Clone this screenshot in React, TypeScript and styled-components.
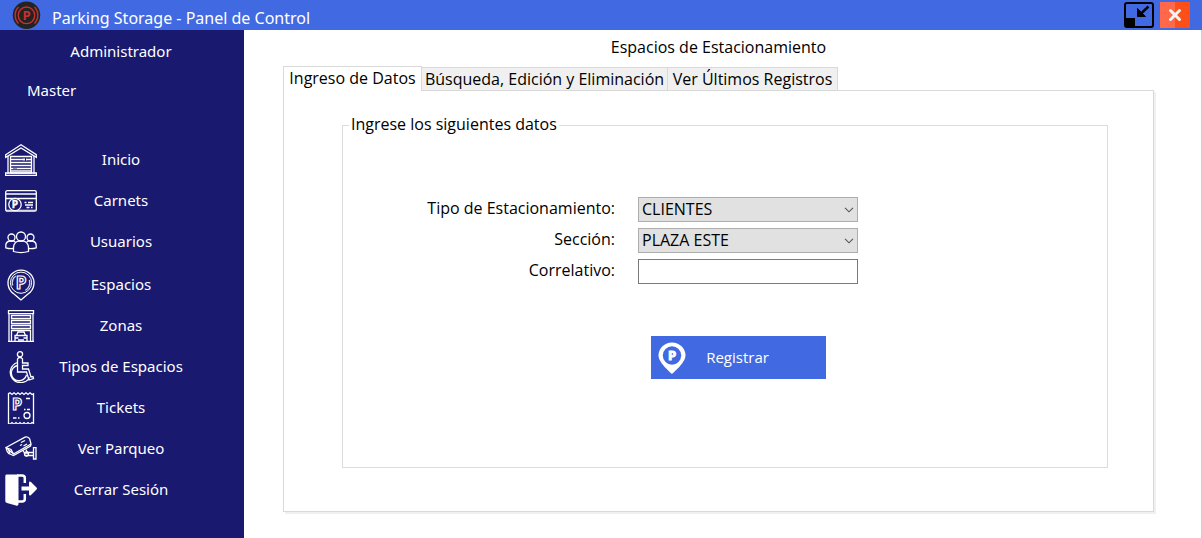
import React, { useState } from 'react';
import styled, { createGlobalStyle } from 'styled-components';

const GlobalStyle = createGlobalStyle`
  * { box-sizing: border-box; }
  body { margin: 0; background: #fff; }
  body {
    font-family: 'Noto Sans', 'Open Sans', sans-serif;
    font-size: 15px;
    line-height: 20px;
  }
  button, input, select { font: inherit; }
`;

const Shell = styled.div`
  display: flex;
  flex-direction: column;
  min-height: 100vh;
`;

const TitleBar = styled.header`
  display: flex;
  align-items: center;
  height: 30px;
  padding: 0 12px;
  background: #4169e1;
  color: #fff;
`;

const AppName = styled.h1`
  flex: 1;
  margin: 0;
  padding: 6px 0 0 11px;
  font-size: 16px;
  font-weight: 400;
  line-height: 24px;
`;

const WindowButtons = styled.div`
  display: flex;
  gap: 6px;
`;

const WindowButton = styled.button`
  display: block;
  width: 30px;
  height: 26px;
  padding: 0;
  border: 0;
  background: none;
`;

const Body = styled.div`
  display: flex;
  flex: 1;
`;

const Sidebar = styled.nav`
  flex: none;
  width: 244px;
  background: #191970;
  color: #fff;
`;

const Role = styled.div`
  padding: 11px 2px 0 0;
  text-align: center;
`;

const UserName = styled.div`
  padding: 19px 27px 0;
`;

const Menu = styled.ul`
  margin: 39px 0 0;
  padding: 0;
  list-style: none;

  & + & { margin-top: 2px; }
`;

const MenuLink = styled.a`
  display: grid;
  grid-template-columns: 32px 1fr 32px;
  align-items: center;
  height: 41px;
  padding: 0 7px 0 5px;
  color: #fff;
  text-align: center;
  text-decoration: none;
`;

const Caption = styled.span`
  padding-bottom: 2px;
`;

const Main = styled.main`
  display: flex;
  flex: 1;
  flex-direction: column;
  padding: 7px 47px 26px 39px;
  border-right: 1px solid #d0d0d0;
  font-family: 'Open Sans', 'Noto Sans', sans-serif;
  font-size: 16px;
`;

const Heading = styled.h2`
  margin: 0 0 9px;
  font-size: 16px;
  font-weight: 400;
  line-height: 20px;
  text-align: center;
`;

const TabList = styled.div`
  display: flex;
  align-items: flex-end;
`;

const Tab = styled.button<{ $active: boolean; $width: number }>`
  position: relative;
  width: ${p => p.$width}px;
  height: ${p => (p.$active ? 25 : 23)}px;
  margin: 0 -1px ${p => (p.$active ? -1 : 0)}px 0;
  padding: ${p => (p.$active ? '0 0 3px' : '0')};
  border: 1px solid #d9d9d9;
  border-bottom: 0;
  background: ${p => (p.$active ? '#fff' : '#f0f0f0')};
  color: #000;
  white-space: nowrap;
  z-index: ${p => (p.$active ? 1 : 0)};
`;

const Panel = styled.section`
  flex: 1;
  display: flex;
  padding: 23px 45px 43px 58px;
  border: 1px solid #d9d9d9;
  box-shadow: 2px 2px 0 #f0f0f0;
`;

const Form = styled.form`
  display: flex;
  flex: 1;
`;

const Group = styled.fieldset`
  flex: 1;
  min-width: 0;
  margin: 0;
  padding: 61px 0 80px;
  border: 1px solid #dcdcdc;
`;

const Legend = styled.legend`
  margin-left: 6px;
  padding: 0 2px 2px;
`;

const Fields = styled.div`
  display: grid;
  grid-template-columns: 272px 220px;
  gap: 6px 23px;
`;

const Label = styled.label`
  padding-top: 1px;
  text-align: right;
`;

const SelectBox = styled.div`
  display: grid;
  align-items: center;

  & > * { grid-area: 1 / 1; }
  svg { justify-self: end; margin-right: 4px; pointer-events: none; }
`;

const Select = styled.select`
  width: 100%;
  height: 25px;
  padding: 0 20px 1px 3px;
  appearance: none;
  border: 1px solid #adadad;
  border-radius: 0;
  background: #e1e1e1;
  color: #000;
`;

const TextInput = styled.input`
  width: 100%;
  height: 25px;
  padding: 0 4px;
  border: 1px solid #7a7a7a;
  background: #fff;
`;

const SubmitButton = styled.button`
  display: grid;
  grid-template-columns: 32px 1fr 32px;
  align-items: center;
  width: 175px;
  height: 43px;
  margin: 52px 0 0 308px;
  padding: 0 7px 0 5px;
  border: 0;
  background: #4169e1;
  color: #fff;
  font-size: 15px;
`;

const LineIcon = styled.svg`
  display: block;
  width: 32px;
  height: 32px;
  fill: none;
  stroke: #fff;
  stroke-width: 1.3;
`;

const Letter = styled.text`
  font-family: 'Open Sans', sans-serif;
  font-weight: 700;
  text-anchor: middle;
`;

const Icon = ({ children }: { children: React.ReactNode }) => (
  <LineIcon viewBox="0 0 32 32" aria-hidden="true">{children}</LineIcon>
);

const GarageIcon = () => (
  <Icon>
    <path d="M.7 10.7 16 .8l15.3 9.900v2.600L16 4 .7 13.300z" />
    <path d="M3 12v18M29 12v18M.6 29h30.800v2.400H.6z" />
    <path d="M5.500 12.500h21V29h-21z" />
    <path d="M6 15.500h12M22 15.500h4M6 18.500h20M6 21.500h20M6 24.500h2M12 24.500h14M6 27h20" />
    <path d="M18 15.500h2M21 15.500h1M8.500 24.500h1M10.500 24.500h1" strokeWidth="2" />
  </Icon>
);

const CardIcon = () => (
  <Icon>
    <rect x=".7" y="5.700" width="30.600" height="20.500" rx="1.500" />
    <path d="M1 9h30M1 13.500h30" />
    <path d="M1 25.300h30" opacity=".7" />
    <circle cx="10" cy="19.500" r="6.200" fill="#191970" />
    <Letter x="10" y="23.200" fontSize="10" fill="#fff" strokeWidth=".4">P</Letter>
    <path d="M19.500 17.500h2M23 17.500h5M20 20h8M21.500 22.500h3M26 22.500h1.500" />
  </Icon>
);

const UsersIcon = () => (
  <Icon>
    <circle cx="16" cy="10.500" r="4.500" />
    <path d="M8.500 25.500v-4c0-3.500 2.500-6 5-6.300h5c2.500.3 5 2.800 5 6.300v4c-4 1.200-11 1.200-15 0z" />
    <circle cx="6.500" cy="11.500" r="3.500" />
    <circle cx="25.500" cy="11.500" r="3.500" />
    <path d="M8.500 22.500C5.500 22.800 3 22.500.8 21.800v-2c0-2.800 2-4.500 4-4.800h4l1.500 1M23.500 22.500c3 .3 5.500 0 7.700-.7v-2c0-2.800-2-4.500-4-4.800h-4l-1.500 1" />
  </Icon>
);

const PinIcon = () => (
  <Icon>
    <path d="M16 31 9 25A13 13 0 1 1 23 25z" />
    <circle cx="16" cy="13.700" r="10.600" strokeWidth="1" />
    <path d="M7.700 16.500a9 9 0 0 1 3-9.500M24.300 11a9 9 0 0 1-4 10.500" opacity=".8" />
    <Letter x="16" y="19.800" fontSize="17" strokeWidth="1.200">P</Letter>
  </Icon>
);

const WarehouseIcon = () => (
  <Icon>
    <path d="M3.500.7h25v3h-25zM4 4v27.500M28 4v27.500M3 31.400h26M6.500 20v11M25.500 20v11" />
    <path d="M6.500 5.500h19v3h-19zM6.500 10.500h19v3h-19zM6.500 15.500h19v3h-19zM6.500 20.500h19" />
    <path d="M10 31v-5.500h12V31M11.500 25.500l1.500-3.500h6l1.500 3.500M10.500 28h3M18.500 28H22M13 30h6" />
  </Icon>
);

const WheelchairIcon = () => (
  <Icon>
    <circle cx="15" cy="3.300" r="2.600" />
    <path d="M12.500 8c1-2 4-2 5 0v4h5.500v2.500h-5.500v3.500h6l2.500 8 2-.5.5 2-4.500 1.500-2.500-8h-9z" />
    <path d="M12.500 11.500A10.300 10.300 0 1 0 24.500 26.500M12.500 14.500A7.700 7.700 0 1 0 21.500 24" />
  </Icon>
);

const TicketIcon = () => (
  <Icon>
    <path d="M3.500 1.500 5 .8l2 1.700 2-1.700 2 1.700 2-1.700 2 1.700 2-1.700 2 1.700 2-1.700 2 1.700 2-1.700 2 1.700 1.500-.7v29.500l-1.500-.7-2 1.700-2-1.700-2 1.700-2-1.700-2 1.700-2-1.700-2 1.700-2-1.700-2 1.700-2-1.700-2 1.700-1.500-.7z" />
    <Letter x="12" y="17.500" fontSize="16" strokeWidth="1.200">P</Letter>
    <circle cx="22" cy="23.500" r="3" />
    <path d="M21 6.500h4M19 17.500h1.500M22 17.500h3M8 26h3.500M13 26h1.500" />
  </Icon>
);

const CameraIcon = () => (
  <Icon>
    <path d="M1 14.500 20 4.200c2-.8 4 .3 4.700 1.800l1.300 5-17.500 10z" />
    <path d="M1 14.500 2 18c.5 1.600 2 2.800 4 3.500l2.500 1 17-9.500.5-2M8.500 21 6 16.500 1 14.500M3.500 17l1.500 3" />
    <path d="M15 12.500l2-1M18.500 13l3.500-2M16 9.500l4-2" />
    <path d="M18 17.500l1.500 2.500h3l-1.500-3.500M22.500 19.500h6M20 22.500h8.500M28.500 14.700h2.500v11.300h-2.500z" />
    <circle cx="21.500" cy="21" r="2" />
  </Icon>
);

const LogoutIcon = () => (
  <Icon>
    <path d="M2 .5h10c1 0 1.500.5 1.500 1.500v27.500c0 2-1 2.500-2.500 2L2 29C.7 28.500.3 28 .3 26.500V2.500C.3 1 .8.500 2 .5z" fill="#fff" stroke="none" />
    <path d="M12 1.500h5c2 0 2.800.8 2.800 2.500v5M12 27.500h5c2 0 2.800-.8 2.800-2.500v-5" strokeWidth="2.500" />
    <path d="M16.500 12.500H24V9c0-1.500 1-2 2-1l5.500 5.500c.6.600.6 1.400 0 2L26 21c-1 1-2 .5-2-1v-3.500h-7.500z" fill="#fff" stroke="none" />
  </Icon>
);

const Logo = () => (
  <svg width="29" height="28" viewBox="0 0 29 28" aria-hidden="true">
    <circle cx="14.500" cy="14.300" r="13.700" fill="#232323" />
    <g fill="none" stroke="#c9302c" strokeWidth="1.400">
      <circle cx="14.500" cy="14.300" r="8.300" />
      <path d="M6.500 6a12 12 0 0 0 0 16.600M22.500 6a12 12 0 0 1 0 16.600" />
    </g>
    <Letter x="14.700" y="19" fontSize="13" fill="#c9302c">P</Letter>
  </svg>
);

const RestoreIcon = () => (
  <svg width="30" height="26" viewBox="0 0 30 26" aria-hidden="true">
    <rect x="1" y="1" width="28" height="24" rx="2" fill="none" stroke="#000" strokeWidth="2" />
    <path d="M1 16h10v9H2.500L1 23.500z" />
    <path d="M24.500 4.500 17 11.500" stroke="#000" strokeWidth="2.400" />
    <path d="M13.500 6.500v8h8z" strokeLinejoin="round" stroke="#000" />
  </svg>
);

const CloseIcon = () => (
  <svg width="30" height="26" viewBox="0 0 30 26" aria-hidden="true">
    <path d="M0 0h15v26H0z" fill="#ff6849" />
    <path d="M15 0h15v26H15z" fill="#ff4f19" />
    <path d="M10.500 8.500l9 9M19.500 8.500l-9 9" stroke="#f5f5f5" strokeWidth="3" strokeLinecap="round" />
  </svg>
);

const SolidPin = () => (
  <svg width="32" height="32" viewBox="0 0 32 32" aria-hidden="true">
    <path d="M16 32C14 30 2.500 20.500 2.500 13.500a13.500 13 0 0 1 27 0C29.500 20.500 18 30 16 32z" fill="#fff" />
    <circle cx="16" cy="13.500" r="9.200" fill="#4169e1" />
    <Letter x="16" y="18" fontSize="13" fill="#fff" stroke="#fff">P</Letter>
  </svg>
);

const Chevron = () => (
  <svg width="10" height="6" viewBox="0 0 10 6" aria-hidden="true">
    <path d="M1 .8l4 4 4-4" fill="none" stroke="#555" strokeWidth="1.100" />
  </svg>
);

const menus = [
  [
    { name: 'Inicio', icon: <GarageIcon /> },
    { name: 'Carnets', icon: <CardIcon /> },
    { name: 'Usuarios', icon: <UsersIcon /> },
  ],
  [
    { name: 'Espacios', icon: <PinIcon /> },
    { name: 'Zonas', icon: <WarehouseIcon /> },
    { name: 'Tipos de Espacios', icon: <WheelchairIcon /> },
    { name: 'Tickets', icon: <TicketIcon /> },
    { name: 'Ver Parqueo', icon: <CameraIcon /> },
    { name: 'Cerrar Sesión', icon: <LogoutIcon /> },
  ],
];

const tabs = [
  { name: 'Ingreso de Datos', width: 139 },
  { name: 'Búsqueda, Edición y Eliminación', width: 247 },
  { name: 'Ver Últimos Registros', width: 171 },
];

export default function App() {
  const [active, setActive] = useState(0);
  return (
    <Shell>
      <GlobalStyle />
      <TitleBar>
        <Logo />
        <AppName>Parking Storage - Panel de Control</AppName>
        <WindowButtons>
          <WindowButton type="button" aria-label="Restaurar"><RestoreIcon /></WindowButton>
          <WindowButton type="button" aria-label="Cerrar"><CloseIcon /></WindowButton>
        </WindowButtons>
      </TitleBar>
      <Body>
        <Sidebar>
          <Role>Administrador</Role>
          <UserName>Master</UserName>
          {menus.map((items, i) => (
            <Menu key={i}>
              {items.map(item => (
                <li key={item.name}>
                  <MenuLink href="#">{item.icon}<Caption>{item.name}</Caption></MenuLink>
                </li>
              ))}
            </Menu>
          ))}
        </Sidebar>
        <Main>
          <Heading>Espacios de Estacionamiento</Heading>
          <TabList role="tablist">
            {tabs.map((tab, i) => (
              <Tab
                key={tab.name}
                type="button"
                role="tab"
                aria-selected={i === active}
                $active={i === active}
                $width={tab.width}
                onClick={() => setActive(i)}
              >
                {tab.name}
              </Tab>
            ))}
          </TabList>
          <Panel role="tabpanel">
            <Form onSubmit={e => e.preventDefault()}>
              <Group>
                <Legend>Ingrese los siguientes datos</Legend>
                <Fields>
                  <Label htmlFor="tipo">Tipo de Estacionamiento:</Label>
                  <SelectBox>
                    <Select id="tipo"><option>CLIENTES</option></Select>
                    <Chevron />
                  </SelectBox>
                  <Label htmlFor="seccion">Sección:</Label>
                  <SelectBox>
                    <Select id="seccion"><option>PLAZA ESTE</option></Select>
                    <Chevron />
                  </SelectBox>
                  <Label htmlFor="correlativo">Correlativo:</Label>
                  <TextInput id="correlativo" type="text" />
                </Fields>
                <SubmitButton type="submit">
                  <SolidPin />
                  <Caption>Registrar</Caption>
                </SubmitButton>
              </Group>
            </Form>
          </Panel>
        </Main>
      </Body>
    </Shell>
  );
}
